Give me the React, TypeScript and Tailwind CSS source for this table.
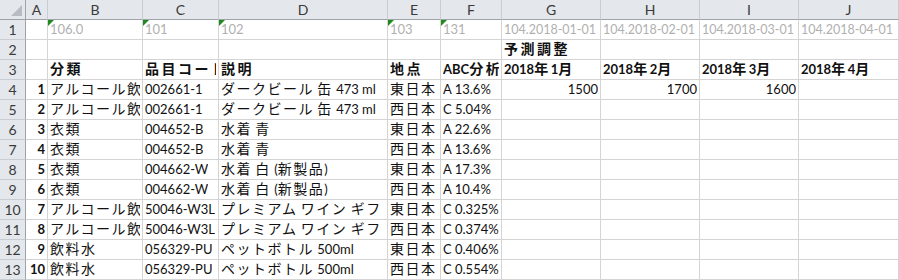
const cols = ['A', 'B', 'C', 'D', 'E', 'F', 'G', 'H', 'I', 'J']

const rows = [
  { no: '1', cat: 'アルコール飲料', code: '002661-1', desc: 'ダークビール 缶 473 ml', area: '東日本', abc: 'A 13.6%', g: '1500', h: '1700', i: '1600' },
  { no: '2', cat: 'アルコール飲料', code: '002661-1', desc: 'ダークビール 缶 473 ml', area: '西日本', abc: 'C 5.04%' },
  { no: '3', cat: '衣類', code: '004652-B', desc: '水着 青', area: '東日本', abc: 'A 22.6%' },
  { no: '4', cat: '衣類', code: '004652-B', desc: '水着 青', area: '西日本', abc: 'A 13.6%' },
  { no: '5', cat: '衣類', code: '004662-W', desc: '水着 白 (新製品)', area: '東日本', abc: 'A 17.3%' },
  { no: '6', cat: '衣類', code: '004662-W', desc: '水着 白 (新製品)', area: '西日本', abc: 'A 10.4%' },
  { no: '7', cat: 'アルコール飲料', code: '50046-W3L', desc: 'プレミアム ワイン ギフト', area: '東日本', abc: 'C 0.325%' },
  { no: '8', cat: 'アルコール飲料', code: '50046-W3L', desc: 'プレミアム ワイン ギフト', area: '西日本', abc: 'C 0.374%' },
  { no: '9', cat: '飲料水', code: '056329-PU', desc: 'ペットボトル 500ml', area: '東日本', abc: 'C 0.406%' },
  { no: '10', cat: '飲料水', code: '056329-PU', desc: 'ペットボトル 500ml', area: '西日本', abc: 'C 0.554%' },
]

// wrap CJK runs so they get the wider, gothic-like spacing of the sheet
const cjk = /([\u3000-\u30ff\u3400-\u9fff\uff00-\uffef]+)/
const Mixed = ({ text, bold }: { text: string; bold?: boolean }) => (
  <>
    {text.split(cjk).map((part, i) =>
      cjk.test(part) ? (
        <span
          key={i}
          className={bold ? 'text-[14px] tracking-[2.5px]' : 'text-[14px] tracking-[1.5px]'}
        >
          {part}
        </span>
      ) : (
        <span key={i}>{part}</span>
      ),
    )}
  </>
)

const Flag = () => (
  <span className="absolute left-0 top-0 h-0 w-0 border-r-[6px] border-t-[6px] border-r-transparent border-t-[#1e8a1e]" />
)

const Cell = ({
  text,
  className = '',
  flag = false,
  bold = false,
}: {
  text?: string
  className?: string
  flag?: boolean
  bold?: boolean
}) => (
  <div
    className={`relative flex h-[20px] items-end overflow-hidden whitespace-nowrap border-b border-r border-[#d4d4d4] px-[2px] pb-[1px] leading-[17px] ${bold ? 'font-bold' : ''} ${className}`}
  >
    {flag && <Flag />}
    {text && (
      <span className="min-w-0 overflow-hidden">
        <Mixed text={text} bold={bold} />
      </span>
    )}
  </div>
)

const RowHead = ({ n }: { n: number }) => (
  <div className="flex h-[20px] items-end justify-center border-b border-r border-b-[#c9cdd2] border-r-[#9ea3a9] bg-[#e4e7eb] pb-[1px] text-[14px] leading-[17px] text-[#3a3a3a]">
    {n}
  </div>
)

const App: React.FC = () => {
  return (
    <div
      className="h-[280px] w-[899px] overflow-hidden bg-white text-[13px] text-[#111]"
      style={{ fontFamily: 'Lato, "Noto Sans CJK JP", sans-serif' }}
    >
      <div className="grid grid-cols-[26px_22px_95px_76px_169px_53px_61px_99px_99px_99px_100px]">
        {/* column headers */}
        <div className="relative h-[20px] border-b border-r border-b-[#9ea3a9] border-r-[#9ea3a9] bg-[#e4e7eb]">
          <span className="absolute bottom-[3px] right-[3px] h-0 w-0 border-b-[11px] border-l-[11px] border-b-[#b8bcc1] border-l-transparent" />
        </div>
        {cols.map((c) => (
          <div
            key={c}
            className="flex h-[20px] items-end justify-center border-b border-r border-b-[#9ea3a9] border-r-[#c9cdd2] bg-[#e4e7eb] pb-[1px] text-[14px] leading-[17px] text-[#3a3a3a]"
          >
            {c}
          </div>
        ))}

        {/* row 1 */}
        <RowHead n={1} />
        <Cell />
        <Cell flag className="text-[#b0b0b0]" text="106.0" />
        <Cell flag className="text-[#b0b0b0]" text="101" />
        <Cell flag className="text-[#b0b0b0]" text="102" />
        <Cell flag className="text-[#b0b0b0]" text="103" />
        <Cell flag className="text-[#b0b0b0]" text="131" />
        <Cell className="text-[12.5px] text-[#b0b0b0]" text="104.2018-01-01" />
        <Cell className="text-[12.5px] text-[#b0b0b0]" text="104.2018-02-01" />
        <Cell className="text-[12.5px] text-[#b0b0b0]" text="104.2018-03-01" />
        <Cell className="text-[12.5px] text-[#b0b0b0]" text="104.2018-04-01" />

        {/* row 2 */}
        <RowHead n={2} />
        <Cell />
        <Cell />
        <Cell />
        <Cell />
        <Cell />
        <Cell />
        <Cell bold text="予測調整" />
        <Cell />
        <Cell />
        <Cell />

        {/* row 3 */}
        <RowHead n={3} />
        <Cell />
        <Cell bold text="分類" />
        <Cell bold text="品目コード" />
        <Cell bold text="説明" />
        <Cell bold text="地点" />
        <Cell bold text="ABC分析" />
        <Cell bold text="2018年1月" />
        <Cell bold text="2018年2月" />
        <Cell bold text="2018年3月" />
        <Cell bold text="2018年4月" />

        {rows.map((r, idx) => (
          <div key={idx} className="contents">
            <RowHead n={idx + 4} />
            <Cell bold className="justify-end" text={r.no} />
            <Cell text={r.cat} />
            <Cell text={r.code} />
            <Cell text={r.desc} />
            <Cell text={r.area} />
            <Cell text={r.abc} />
            <Cell className="justify-end" text={r.g} />
            <Cell className="justify-end" text={r.h} />
            <Cell className="justify-end" text={r.i} />
            <Cell />
          </div>
        ))}
      </div>
    </div>
  )
}

export default App
